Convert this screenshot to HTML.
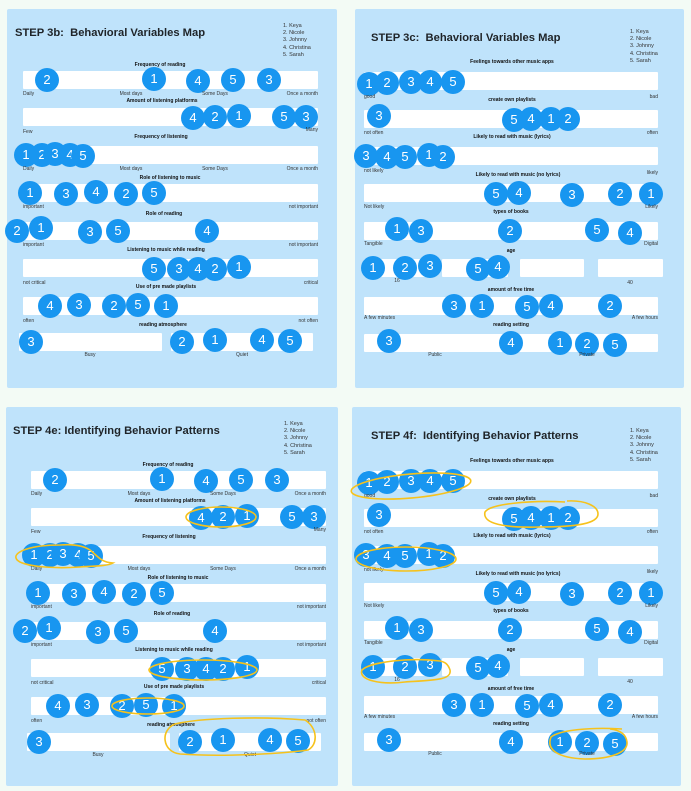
<!DOCTYPE html>
<html><head><meta charset="utf-8"><style>
*{margin:0;padding:0;box-sizing:border-box}
body{width:691px;height:791px;background:#f3fbf5;position:relative;overflow:hidden;font-family:"Liberation Sans",sans-serif;color:#222}
.p{position:absolute;background:#bfe3fb;border-radius:2px}
.g{position:absolute;left:0;top:0}
.b{position:absolute;background:#fff;height:18px;border-radius:1px}
.c{position:absolute;width:24px;height:24px;margin:-12px 0 0 -12px;border-radius:50%;background:#1896f0;color:#fff;font-size:13px;line-height:24px;text-align:center}
.l{position:absolute;font-size:5px;line-height:6px;margin-top:-3px;white-space:nowrap;color:#333}
.m{transform:translateX(-50%)}
.r{transform:translateX(-100%)}
.t{font-weight:bold;color:#111}
.h{position:absolute;font-weight:bold;font-size:11.2px;line-height:14px;margin-top:-7px;white-space:nowrap;color:#1f2428}
.lg{position:absolute;font-size:5.5px;line-height:7.2px;color:#333;white-space:nowrap}
svg{position:absolute;left:0;top:0}
</style></head><body>
<div class="p" style="left:7px;top:9px;width:330px;height:379px"></div>
<div class="p" style="left:355px;top:9px;width:329px;height:379px"></div>
<div class="p" style="left:6px;top:407px;width:332px;height:379px"></div>
<div class="p" style="left:352px;top:407px;width:329px;height:379px"></div>

<div class="h" style="left:15px;top:33px">STEP 3b:&nbsp; Behavioral Variables Map</div>
<div class="lg" style="left:283px;top:23px">1. Keya<br>2. Nicole<br>3. Johnny<br>4. Christina<br>5. Sarah</div>
<div class="h" style="left:371px;top:38px">STEP 3c:&nbsp; Behavioral Variables Map</div>
<div class="lg" style="left:630px;top:29px">1. Keya<br>2. Nicole<br>3. Johnny<br>4. Christina<br>5. Sarah</div>
<div class="h" style="left:13px;top:431px">STEP 4e: Identifying Behavior Patterns</div>
<div class="lg" style="left:284px;top:421px">1. Keya<br>2. Nicole<br>3. Johnny<br>4. Christina<br>5. Sarah</div>
<div class="h" style="left:371px;top:436px">STEP 4f:&nbsp; Identifying Behavior Patterns</div>
<div class="lg" style="left:630px;top:428px">1. Keya<br>2. Nicole<br>3. Johnny<br>4. Christina<br>5. Sarah</div>

<div class="g" id="L1">
<div class="l t m" style="left:160px;top:65px">Frequency of reading</div>
<div class="b" style="left:23px;top:71px;width:295px"></div>
<div class="c" style="left:47px;top:80px">2</div><div class="c" style="left:154px;top:79px">1</div><div class="c" style="left:198px;top:81px">4</div><div class="c" style="left:233px;top:80px">5</div><div class="c" style="left:269px;top:80px">3</div>
<div class="l" style="left:23px;top:94px">Daily</div><div class="l m" style="left:131px;top:94px">Most days</div><div class="l m" style="left:215px;top:94px">Some Days</div><div class="l r" style="left:318px;top:94px">Once a month</div>

<div class="l t m" style="left:162px;top:101px">Amount of listening platforms</div>
<div class="b" style="left:23px;top:108px;width:295px"></div>
<div class="c" style="left:193px;top:118px">4</div><div class="c" style="left:215px;top:117px">2</div><div class="c" style="left:239px;top:116px">1</div><div class="c" style="left:284px;top:117px">5</div><div class="c" style="left:306px;top:117px">3</div>
<div class="l" style="left:23px;top:132px">Few</div><div class="l r" style="left:318px;top:130px">Many</div>

<div class="l t m" style="left:161px;top:137px">Frequency of listening</div>
<div class="b" style="left:23px;top:146px;width:295px"></div>
<div class="c" style="left:26px;top:155px">1</div><div class="c" style="left:42px;top:155px">2</div><div class="c" style="left:55px;top:154px">3</div><div class="c" style="left:70px;top:155px">4</div><div class="c" style="left:83px;top:156px">5</div>
<div class="l" style="left:23px;top:169px">Daily</div><div class="l m" style="left:131px;top:169px">Most days</div><div class="l m" style="left:215px;top:169px">Some Days</div><div class="l r" style="left:318px;top:169px">Once a month</div>

<div class="l t m" style="left:170px;top:178px">Role of listening to music</div>
<div class="b" style="left:23px;top:184px;width:295px"></div>
<div class="c" style="left:30px;top:193px">1</div><div class="c" style="left:66px;top:194px">3</div><div class="c" style="left:96px;top:192px">4</div><div class="c" style="left:126px;top:194px">2</div><div class="c" style="left:154px;top:193px">5</div>
<div class="l" style="left:23px;top:207px">important</div><div class="l r" style="left:318px;top:207px">not important</div>

<div class="l t m" style="left:164px;top:214px">Role of reading</div>
<div class="b" style="left:23px;top:222px;width:295px"></div>
<div class="c" style="left:17px;top:231px">2</div><div class="c" style="left:41px;top:228px">1</div><div class="c" style="left:90px;top:232px">3</div><div class="c" style="left:118px;top:231px">5</div><div class="c" style="left:207px;top:231px">4</div>
<div class="l" style="left:23px;top:245px">important</div><div class="l r" style="left:318px;top:245px">not important</div>

<div class="l t m" style="left:166px;top:250px">Listening to music while reading</div>
<div class="b" style="left:23px;top:259px;width:295px"></div>
<div class="c" style="left:154px;top:269px">5</div><div class="c" style="left:179px;top:269px">3</div><div class="c" style="left:198px;top:269px">4</div><div class="c" style="left:215px;top:269px">2</div><div class="c" style="left:239px;top:267px">1</div>
<div class="l" style="left:23px;top:283px">not critical</div><div class="l r" style="left:318px;top:283px">critical</div>

<div class="l t m" style="left:166px;top:287px">Use of pre made playlists</div>
<div class="b" style="left:23px;top:297px;width:295px"></div>
<div class="c" style="left:50px;top:306px">4</div><div class="c" style="left:79px;top:305px">3</div><div class="c" style="left:114px;top:306px">2</div><div class="c" style="left:138px;top:305px">5</div><div class="c" style="left:166px;top:306px">1</div>
<div class="l" style="left:23px;top:321px">often</div><div class="l r" style="left:318px;top:321px">not often</div>

<div class="l t m" style="left:163px;top:325px">reading atmosphere</div>
<div class="b" style="left:19px;top:333px;width:143px"></div><div class="b" style="left:171px;top:333px;width:142px"></div>
<div class="c" style="left:31px;top:342px">3</div><div class="c" style="left:182px;top:342px">2</div><div class="c" style="left:215px;top:340px">1</div><div class="c" style="left:262px;top:340px">4</div><div class="c" style="left:290px;top:341px">5</div>
<div class="l m" style="left:90px;top:355px">Busy</div><div class="l m" style="left:242px;top:355px">Quiet</div>
</div>

<div class="g" id="R1">
<div class="l t m" style="left:512px;top:62px">Feelings towards other music apps</div>
<div class="b" style="left:364px;top:72px;width:294px"></div>
<div class="c" style="left:369px;top:84px">1</div><div class="c" style="left:387px;top:83px">2</div><div class="c" style="left:411px;top:82px">3</div><div class="c" style="left:430px;top:82px">4</div><div class="c" style="left:453px;top:82px">5</div>
<div class="l" style="left:364px;top:97px">good</div><div class="l r" style="left:658px;top:97px">bad</div>

<div class="l t m" style="left:512px;top:100px">create own playlists</div>
<div class="b" style="left:364px;top:110px;width:294px"></div>
<div class="c" style="left:379px;top:116px">3</div><div class="c" style="left:514px;top:120px">5</div><div class="c" style="left:531px;top:119px">4</div><div class="c" style="left:551px;top:119px">1</div><div class="c" style="left:568px;top:119px">2</div>
<div class="l" style="left:364px;top:133px">not often</div><div class="l r" style="left:658px;top:133px">often</div>

<div class="l t m" style="left:512px;top:137px">Likely to read with music (lyrics)</div>
<div class="b" style="left:364px;top:147px;width:294px"></div>
<div class="c" style="left:366px;top:156px">3</div><div class="c" style="left:387px;top:157px">4</div><div class="c" style="left:405px;top:157px">5</div><div class="c" style="left:429px;top:155px">1</div><div class="c" style="left:443px;top:157px">2</div>
<div class="l" style="left:364px;top:171px">not likely</div><div class="l r" style="left:658px;top:173px">likely</div>

<div class="l t m" style="left:518px;top:175px">Likely to read with music (no lyrics)</div>
<div class="b" style="left:364px;top:184px;width:294px"></div>
<div class="c" style="left:496px;top:194px">5</div><div class="c" style="left:519px;top:193px">4</div><div class="c" style="left:572px;top:195px">3</div><div class="c" style="left:620px;top:194px">2</div><div class="c" style="left:651px;top:194px">1</div>
<div class="l" style="left:364px;top:207px">Not likely</div><div class="l r" style="left:658px;top:207px">Likely</div>

<div class="l t m" style="left:511px;top:212px">types of books</div>
<div class="b" style="left:364px;top:222px;width:294px"></div>
<div class="c" style="left:397px;top:229px">1</div><div class="c" style="left:421px;top:231px">3</div><div class="c" style="left:510px;top:231px">2</div><div class="c" style="left:597px;top:230px">5</div><div class="c" style="left:630px;top:233px">4</div>
<div class="l" style="left:364px;top:244px">Tangible</div><div class="l r" style="left:658px;top:244px">Digital</div>

<div class="l t m" style="left:511px;top:251px">age</div>
<div class="b" style="left:364px;top:259px;width:66px"></div><div class="b" style="left:442px;top:259px;width:66px"></div><div class="b" style="left:520px;top:259px;width:64px"></div><div class="b" style="left:598px;top:259px;width:65px"></div>
<div class="c" style="left:373px;top:268px">1</div><div class="c" style="left:405px;top:268px">2</div><div class="c" style="left:430px;top:266px">3</div><div class="c" style="left:478px;top:269px">5</div><div class="c" style="left:498px;top:267px">4</div>
<div class="l m" style="left:397px;top:281px">16</div><div class="l m" style="left:630px;top:283px">40</div>

<div class="l t m" style="left:511px;top:290px">amount of free time</div>
<div class="b" style="left:364px;top:297px;width:294px"></div>
<div class="c" style="left:454px;top:306px">3</div><div class="c" style="left:482px;top:306px">1</div><div class="c" style="left:527px;top:307px">5</div><div class="c" style="left:551px;top:306px">4</div><div class="c" style="left:610px;top:306px">2</div>
<div class="l" style="left:364px;top:318px">A few minutes</div><div class="l r" style="left:658px;top:318px">A few hours</div>

<div class="l t m" style="left:511px;top:325px">reading setting</div>
<div class="b" style="left:364px;top:334px;width:294px"></div>
<div class="c" style="left:389px;top:341px">3</div><div class="c" style="left:511px;top:343px">4</div><div class="c" style="left:560px;top:343px">1</div><div class="c" style="left:587px;top:344px">2</div><div class="c" style="left:615px;top:345px">5</div>
<div class="l m" style="left:435px;top:355px">Public</div><div class="l m" style="left:587px;top:355px">Private</div>
</div>

<div id="L2" class="g" style="left:8px;top:400px"></div>
<div id="R2" class="g" style="left:0;top:399px"></div>
<script>
document.getElementById('L2').innerHTML=document.getElementById('L1').innerHTML;
document.getElementById('R2').innerHTML=document.getElementById('R1').innerHTML;
</script>

<svg width="691" height="791" viewBox="0 0 691 791" fill="none" stroke="#f6c21c" stroke-width="1.6">
<ellipse cx="221" cy="517" rx="35" ry="10"/>
<path d="M60 545 C30 545 14 552 16 558 C18 566 50 569 80 567 C95 566 108 566 113 563 C100 562 98 556 90 550 C82 545 72 544 60 545 Z"/>
<ellipse cx="203" cy="670" rx="54" ry="10"/>
<ellipse cx="148" cy="706" rx="36" ry="8"/>
<path d="M305 720 C260 716 200 718 175 724 C160 730 162 752 180 754 C220 757 280 754 308 750 C318 745 318 728 305 720 Z"/>
<ellipse cx="411" cy="486" rx="60" ry="12" transform="rotate(-5 411 486)"/>
<path d="M565 502 C530 500 490 504 485 512 C482 524 505 528 540 527 C575 527 598 524 598 514 C598 506 585 500 567 501"/>
<ellipse cx="406" cy="559" rx="50" ry="12"/>
<path d="M440 661 C410 657 370 662 362 670 C358 680 380 685 405 682 C435 680 452 680 450 670 C448 664 445 662 440 661 Z"/>
<path d="M622 729 C590 727 560 730 551 737 C546 750 558 758 585 759 C612 759 628 752 627 742 C626 734 620 730 610 729"/>
</svg>
</body></html>
